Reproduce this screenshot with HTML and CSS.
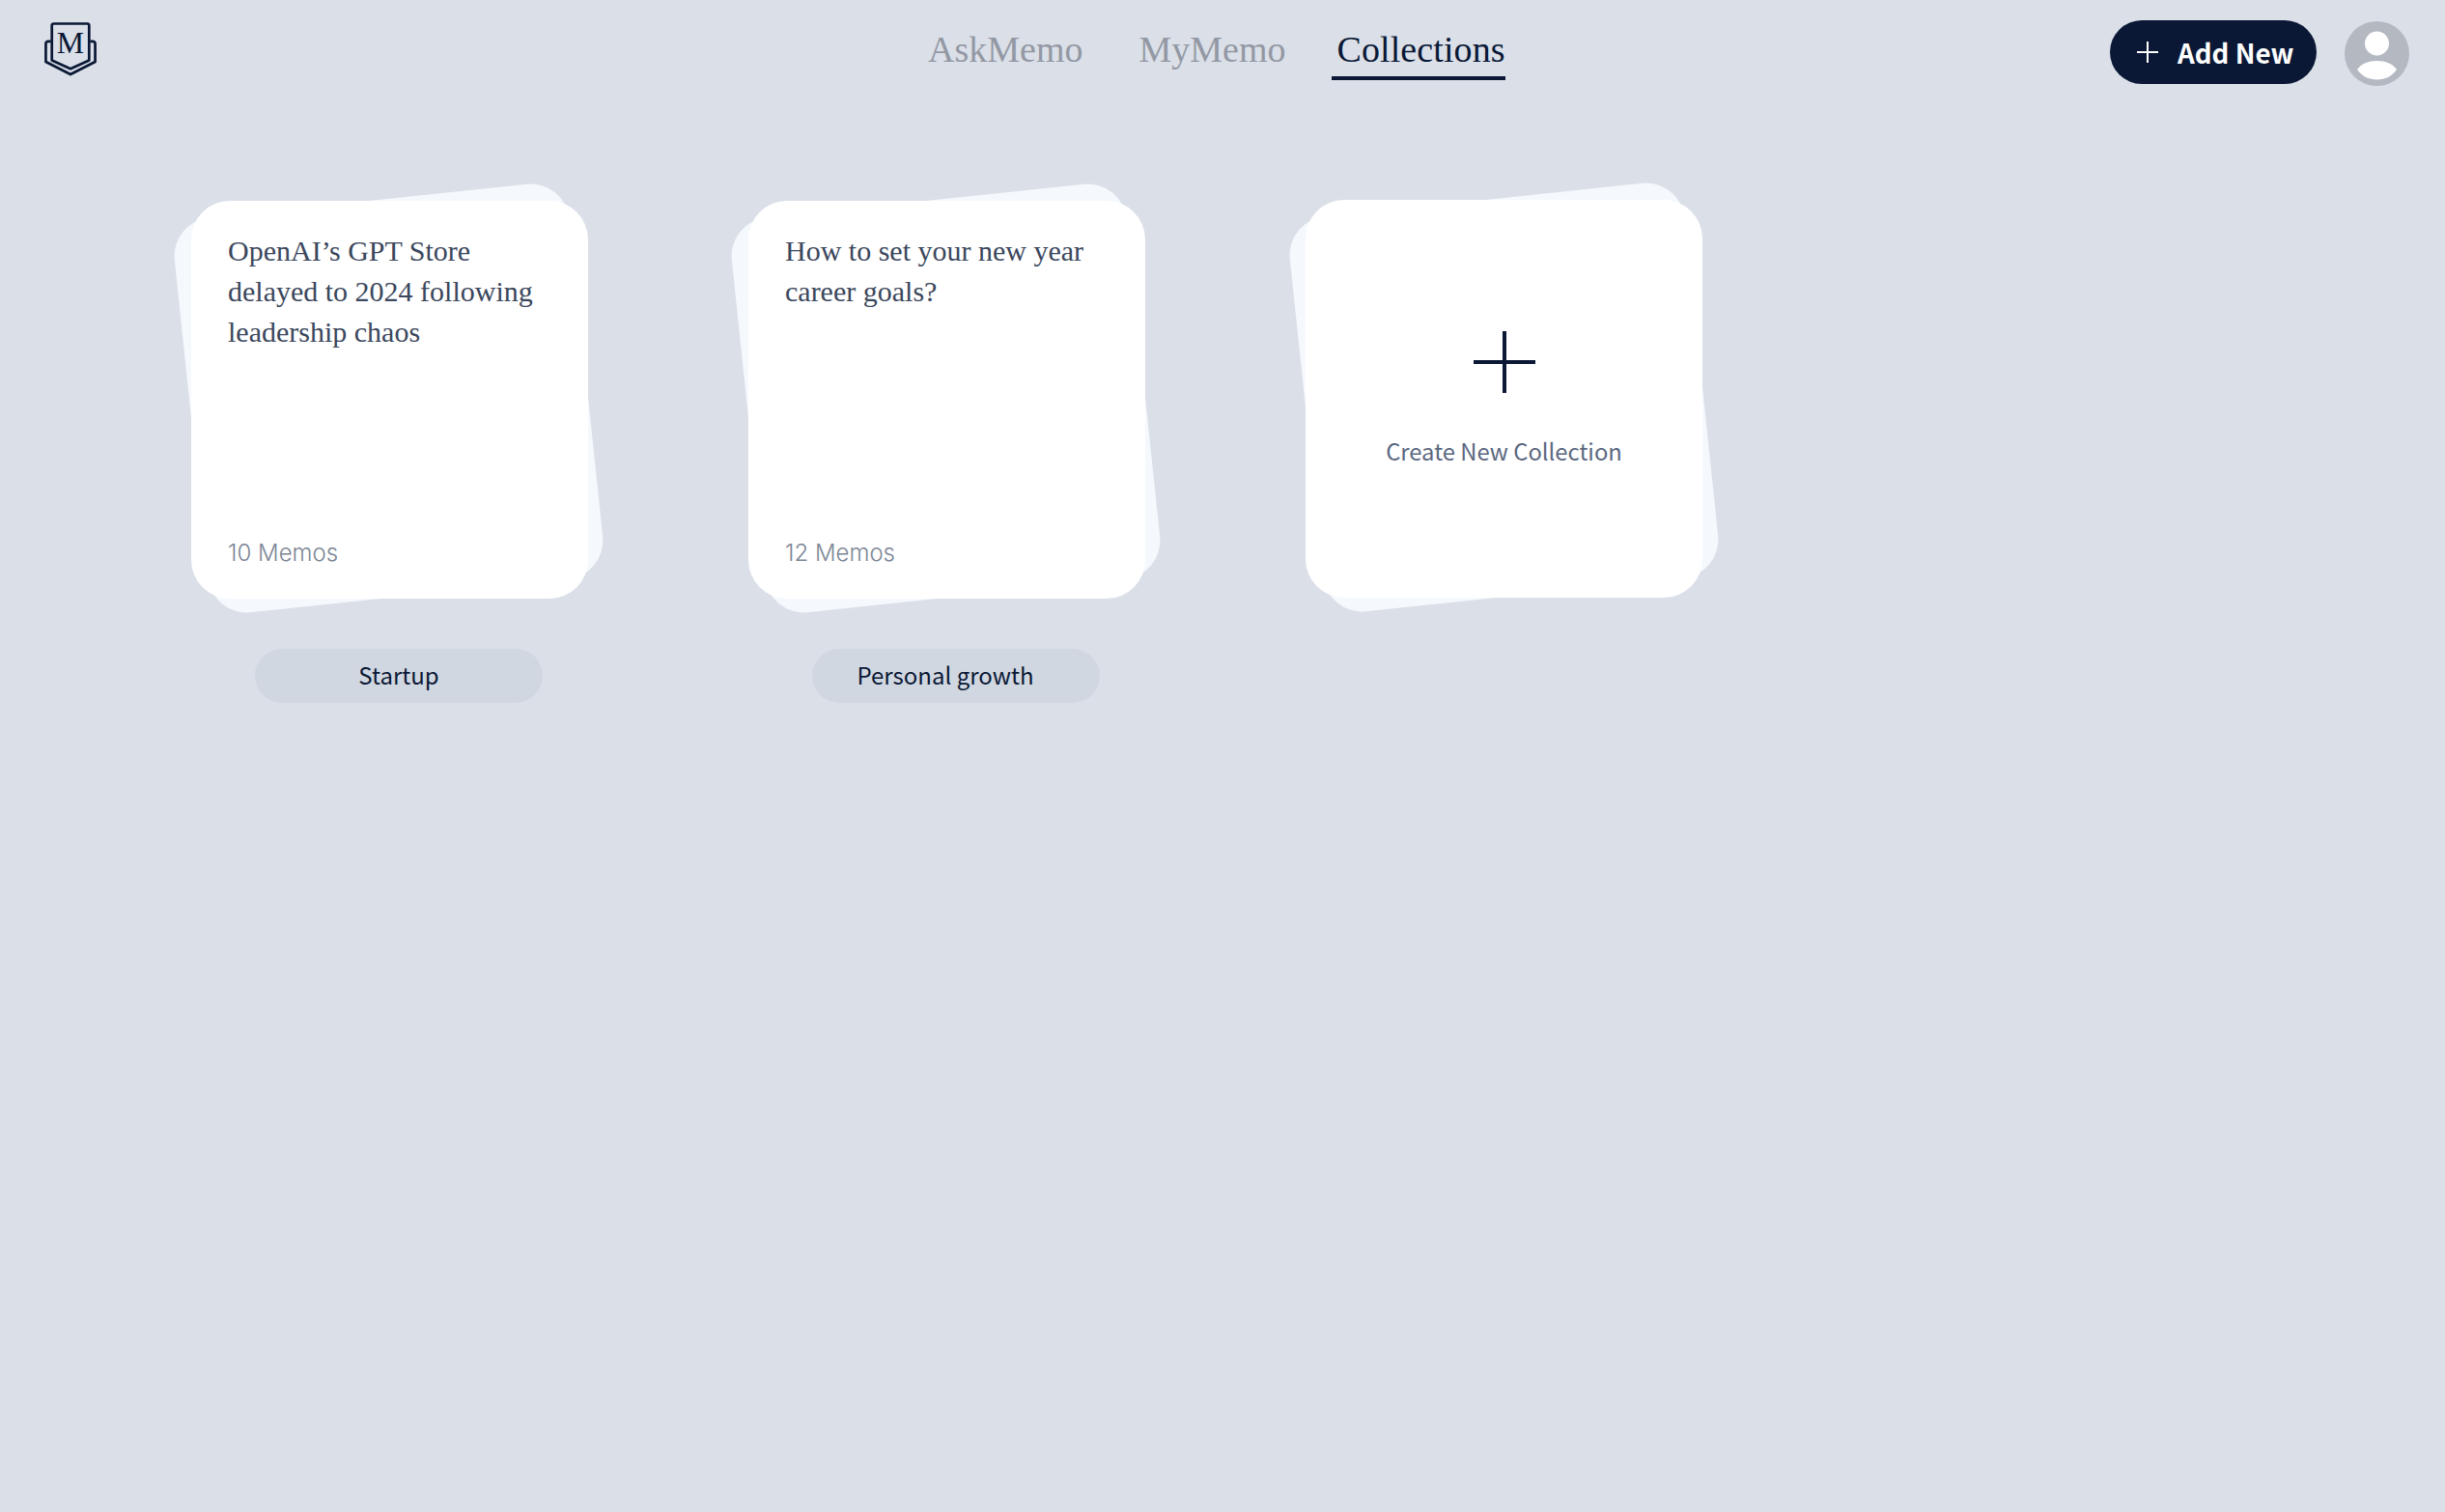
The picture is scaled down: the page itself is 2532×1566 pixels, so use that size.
FILE: index.html
```html
<!DOCTYPE html>
<html lang="en">
<head>
<meta charset="utf-8">
<title>Collections</title>
<link rel="stylesheet" href="styles.css">
</head>
<body>
<header class="topbar">
  <svg class="logo" viewBox="0 0 56 58" width="54" height="56" aria-label="Memo">
    <path class="logo-line" d="M8 3.5a2 2 0 0 1 2-2h36a2 2 0 0 1 2 2v37.500l-20 9-20-9z"/>
    <path class="logo-line" d="M7 20.500h-3a2.500 2.500 0 0 0-2.500 2.500v19.500l26.500 13.500 26.500-13.500v-19.500a2.500 2.500 0 0 0-2.500-2.500h-3"/>
    <text class="logo-m" x="28" y="33" text-anchor="middle">M</text>
  </svg>
  <nav class="tabs">
    <a class="tab">AskMemo</a>
    <a class="tab">MyMemo</a>
    <a class="tab tab-active">Collections</a>
  </nav>
  <div class="actions">
    <button class="add-btn">
      <svg class="add-icon" viewBox="0 0 22 22" width="22" height="22"><path d="M11 0v22M0 11h22"/></svg>
      <span>Add New</span>
    </button>
    <svg class="avatar" viewBox="0 0 67 67" width="67" height="67">
      <circle class="avatar-bg" cx="33.500" cy="33.500" r="33.500"/>
      <circle class="avatar-fg" cx="33.500" cy="23" r="12.500"/>
      <path class="avatar-fg" d="M13 50c4-6 12-9 20.500-9s16.500 3 20.500 9c-5 7-12 10.500-20.500 10.500s-15.500-3.500-20.500-10.500z"/>
    </svg>
  </div>
</header>
<main class="grid">
  <section class="collection">
    <div class="stack">
      <div class="stack-back"></div>
      <article class="card">
        <h2 class="card-title">OpenAI’s GPT Store delayed to 2024 following leadership chaos</h2>
        <p class="card-count">10 Memos</p>
      </article>
    </div>
    <div class="pill"><span>Startup</span></div>
  </section>
  <section class="collection">
    <div class="stack">
      <div class="stack-back"></div>
      <article class="card">
        <h2 class="card-title">How to set your new year career goals?</h2>
        <p class="card-count">12 Memos</p>
      </article>
    </div>
    <div class="pill pill-offset"><span>Personal growth</span></div>
  </section>
  <section class="collection collection-new">
    <div class="stack">
      <div class="stack-back"></div>
      <article class="card card-new">
        <svg class="new-icon" viewBox="0 0 64 64" width="64" height="64"><path d="M32 0v64M0 32h64"/></svg>
        <p class="new-label">Create New Collection</p>
      </article>
    </div>
  </section>
</main>
</body>
</html>
```
FILE: styles.css
```css
* { box-sizing: border-box; }
html, body { margin: 0; height: 100%; }
body {
  background: #dadfe8;
  color: #0a1835;
  font-family: "Noto Sans CJK SC", "Noto Sans", sans-serif;
  min-height: 1566px;
}
.topbar {
  display: flex;
  align-items: flex-start;
  height: 110px;
  padding: 21px 37px 0 46px;
}
.logo { margin-top: 2px; flex: none; }
.logo-line { fill: none; stroke: #0a1835; stroke-width: 2.800; stroke-linejoin: round; }
.logo-m { font-family: "Liberation Serif", serif; font-size: 33px; fill: #0a1835; }
.tabs {
  display: flex;
  gap: 58px;
  margin-left: 861px;
}
.tab {
  font-family: "Liberation Serif", serif;
  font-size: 38px;
  line-height: 44px;
  height: 62px;
  color: #9398a3;
  padding: 8px 0 0;
  display: block;
}
.tab-active {
  color: #0a1835;
  margin-left: -10px;
  padding-left: 5px;
  letter-spacing: 0.1px;
  border-bottom: 4px solid #0a1835;
}
.actions {
  margin-left: auto;
  display: flex;
  align-items: flex-start;
  gap: 29px;
}
.add-btn {
  display: flex;
  align-items: center;
  gap: 20px;
  width: 214px;
  height: 66px;
  padding: 0 0 0 28px;
  border: 0;
  border-radius: 33px;
  background: #0a1835;
  color: #fff;
  font-family: inherit;
  font-size: 27.700px;
  font-weight: 700;
}
.add-icon { flex: none; }
.add-icon path { stroke: #fff; stroke-width: 2; fill: none; }
.avatar { margin-top: 1px; flex: none; }
.avatar-bg { fill: #b3b8c1; }
.avatar-fg { fill: #fff; }
.grid {
  display: grid;
  grid-template-columns: repeat(3, 411px);
  column-gap: 166px;
  padding: 98px 0 0 198px;
  align-items: start;
}
.collection-new { margin-top: -1px; }
.stack {
  position: relative;
  width: 411px;
  height: 412px;
}
.stack-back {
  position: absolute;
  left: -1px;
  top: -1.500px;
  width: 411px;
  height: 411px;
  border-radius: 40px;
  background: #f5f9fd;
  transform: rotate(-6deg);
}
.collection-new .stack-back { left: 0; }
.card {
  position: relative;
  height: 100%;
  display: flex;
  flex-direction: column;
  padding: 31px 30px 31px 38px;
  border-radius: 40px;
  background: #fff;
}
.card-title {
  margin: 0;
  font-family: "Liberation Serif", serif;
  font-size: 30px;
  line-height: 42px;
  font-weight: 400;
  color: #3b475c;
}
.card-count {
  margin: auto 0 0;
  font-family: Inter, sans-serif;
  font-weight: 300;
  font-size: 24px;
  line-height: 32px;
  color: #7d8695;
}
.card-new {
  align-items: center;
  padding: 136px 0 0;
}
.new-icon path { stroke: #0a1835; stroke-width: 4; fill: none; }
.new-label {
  margin: 41px 0 0;
  font-size: 23.800px;
  line-height: 38px;
  font-weight: 400;
  color: #5b6780;
}
.pill {
  display: flex;
  justify-content: center;
  align-items: center;
  width: 298px;
  height: 56px;
  margin: 52px 0 0 66px;
  padding-bottom: 4px;
  border-radius: 28px;
  background: #d1d7e0;
  font-size: 24px;
  color: #0a1835;
}
.pill-offset {
  padding-right: 22px;
}
```
